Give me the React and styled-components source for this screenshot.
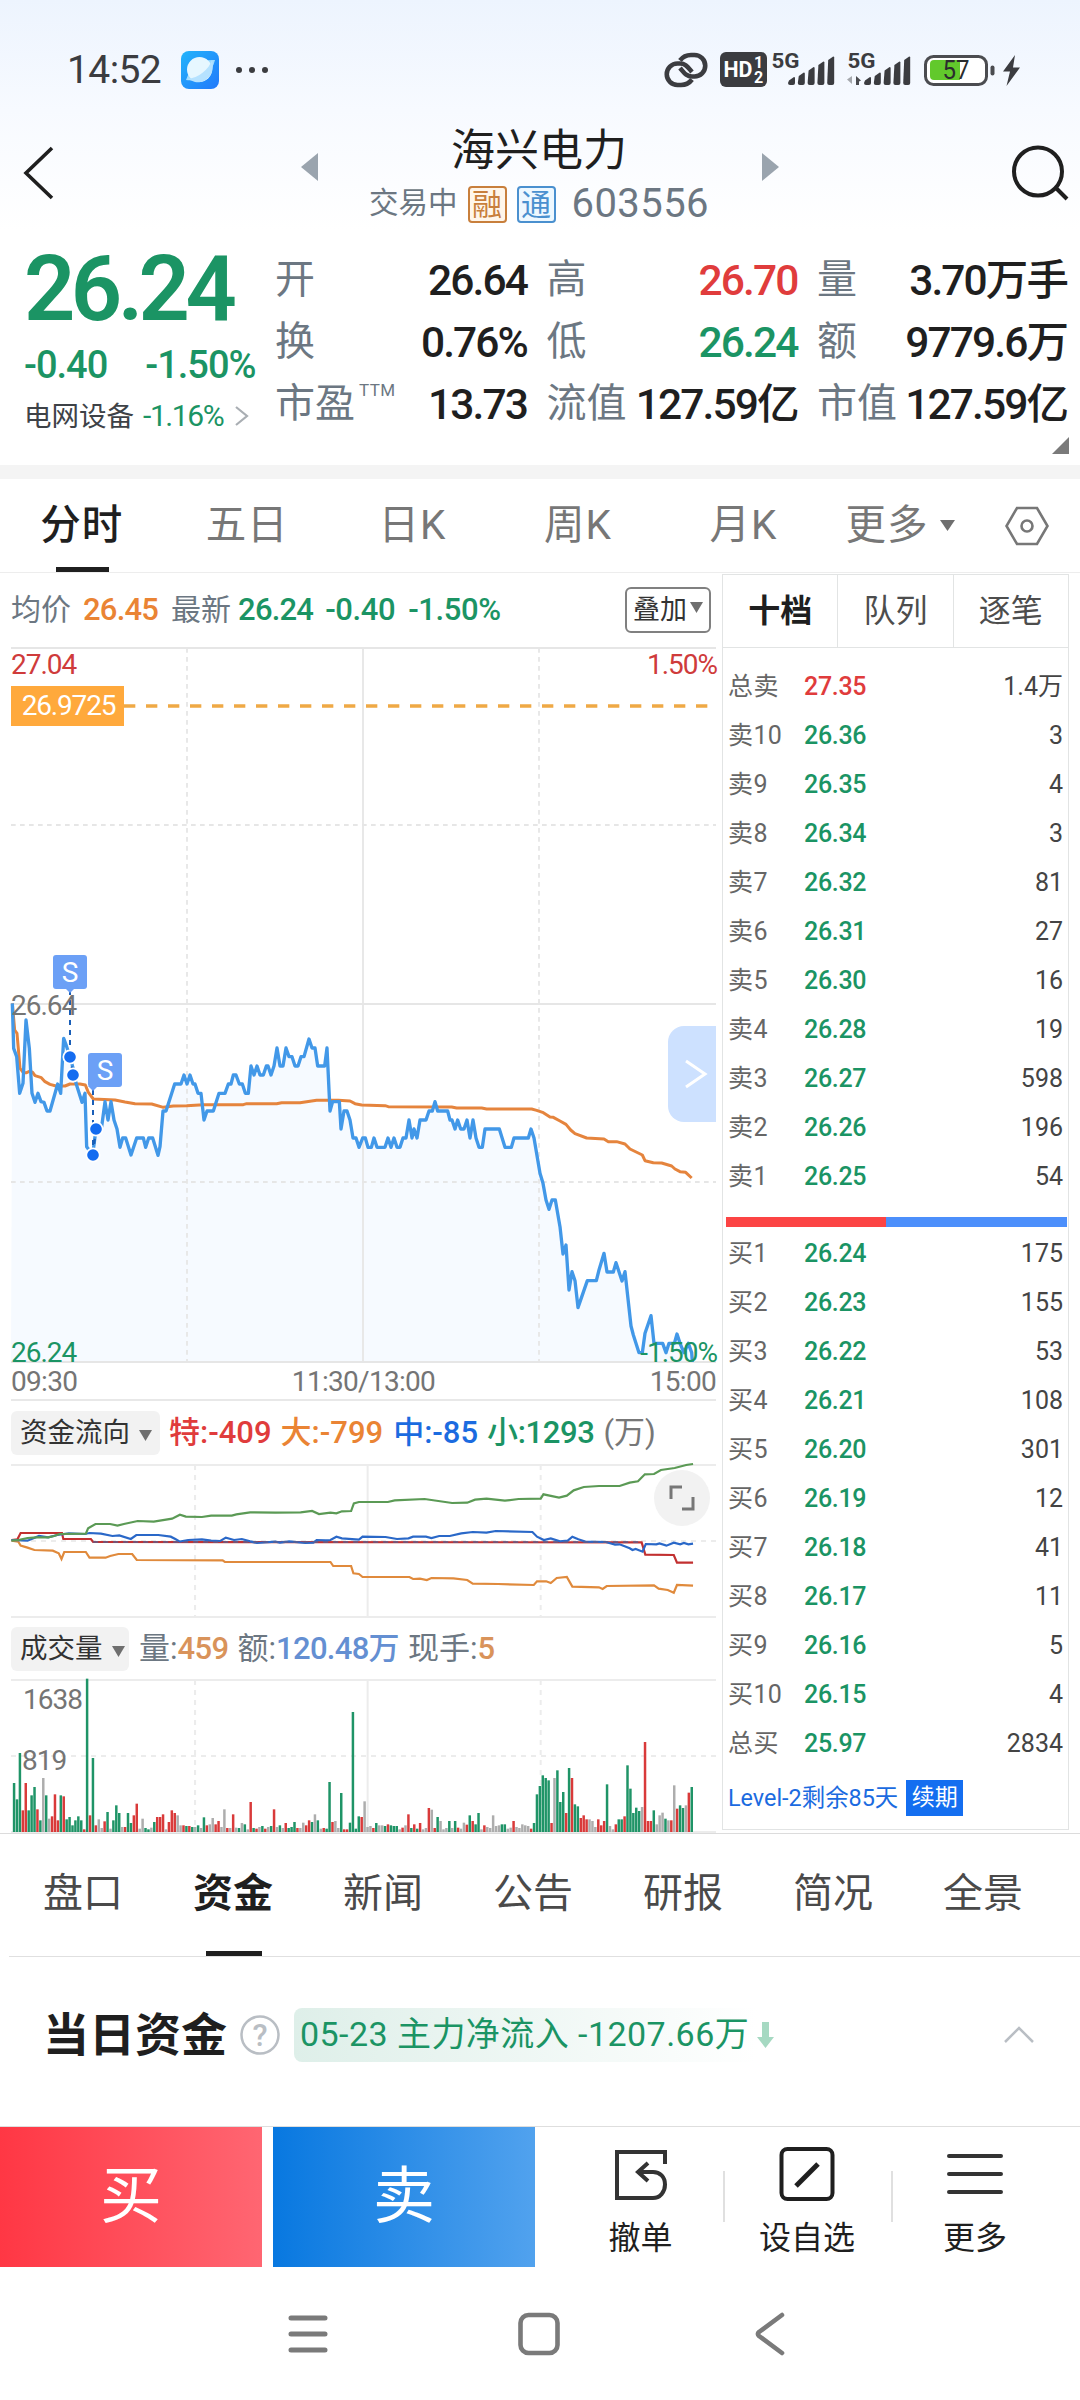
import React, { useState } from 'react'
import styled, { createGlobalStyle } from 'styled-components'

const GREEN = '#1b9464'
const RED = '#e03c3c'
const ORANGE = '#ea8434'
const BLUE = '#1b6be0'
const SLATE = '#6c7782'
const INK = '#1f1f1f'

const GlobalStyle = createGlobalStyle`
    * { box-sizing: border-box; }
    body {
        margin: 0;
        background: #fff;
        font-family: Roboto, "Noto Sans CJK SC", sans-serif;
        line-height: 1.2;
        color: ${INK};
    }
    button {
        font: inherit;
        color: inherit;
        border: 0;
        padding: 0;
        background: none;
    }
    svg { display: block; flex: none; }
`;

const Page = styled.div`
    width: 1080px;
    height: 2400px;
    overflow: hidden;
    display: flex;
    flex-direction: column;
    background: linear-gradient(#edf4fe 0, #f7faff 110px, #fff 230px);
`;

/* ---------- status bar ---------- */

const StatusBar = styled.div`
    height: 92px;
    padding: 50px 58px 0 67px;
    display: flex;
    justify-content: space-between;
`;

const StatusGroup = styled.div`
    display: flex;
    align-items: center;
    height: 40px;
    gap: ${props => props.$gap || 0}px;
`;

const Clock = styled.span`
    width: 98px;
    font-size: 39px;
    letter-spacing: -0.6px;
    color: #3b3c40;
`;

const IconSlot = styled.span`
    margin-left: ${props => props.$gap}px;
`;

/* ---------- header ---------- */

const Header = styled.header`
    height: 148px;
    display: flex;
    justify-content: space-between;
    padding: 0 11px 0 23px;
`;

const HeaderSide = styled.button`
    height: 161px;
    width: 60px;
    display: flex;
    align-items: center;
    justify-content: ${props => props.$end ? 'flex-end' : 'flex-start'};
`;

const TitleBlock = styled.div`
    width: 478px;
    margin-left: -13px;
    display: flex;
    justify-content: space-between;
`;

const Switcher = styled.button`
    height: 148px;
    display: flex;
    align-items: flex-start;
    padding-top: 61px;
`;

const TitleText = styled.div`
    display: flex;
    flex-direction: column;
    align-items: center;
    padding: 29px 1px 0 0;
`;

const StockName = styled.h1`
    margin: 0;
    font-size: 44px;
    font-weight: 400;
    line-height: 60px;
`;

const StockMeta = styled.div`
    display: flex;
    align-items: center;
    height: 46px;
    font-size: 29.5px;
    color: ${SLATE};
`;

const MarketTag = styled.span`
    width: 39px;
    height: 37px;
    margin-left: 10px;
    border: 2px solid;
    border-radius: 4px;
    font-size: 30px;
    line-height: 34px;
    text-align: center;
    color: ${props => props.$color};
    background: ${props => props.$bg};
`;

const StockCode = styled.span`
    margin-left: 16px;
    font-size: 40px;
    letter-spacing: 0.4px;
`;

/* ---------- quote ---------- */

const Quote = styled.section`
    height: 225px;
    display: flex;
    padding-right: 11px;
    position: relative;
`;

const QuoteMain = styled.div`
    width: 275px;
    padding: 2px 0 0 24px;
`;

const LastPrice = styled.div`
    height: 96px;
    font-size: 90px;
    font-weight: 600;
    line-height: 96px;
    letter-spacing: -4.6px;
    color: ${GREEN};
`;

const ChangeRow = styled.div`
    display: flex;
    gap: 38px;
    height: 54px;
    font-size: 38px;
    font-weight: 500;
    line-height: 54px;
    letter-spacing: -1px;
    color: ${GREEN};
`;

const SectorRow = styled.div`
    display: flex;
    align-items: center;
    height: 48px;
    font-size: 27.5px;
    color: #3e4247;
`;

const SectorChange = styled.span`
    margin: 0 12px 0 9px;
    font-size: 30px;
    letter-spacing: -1.4px;
    color: ${GREEN};
`;

const StatGrid = styled.div`
    flex: 1;
    display: grid;
    grid-template-columns: 252px 251px 250px;
    grid-auto-rows: 62px;
    column-gap: 19.5px;
    padding-top: 9px;
`;

const Stat = styled.div`
    display: flex;
    align-items: center;
    justify-content: space-between;
    white-space: nowrap;
`;

const StatLabel = styled.span`
    display: flex;
    font-size: 40px;
    line-height: 62px;
    color: ${SLATE};
`;

const StatSup = styled.sup`
    margin: -14px 0 0 4px;
    font-size: 17px;
    letter-spacing: 0.4px;
`;

const StatValue = styled.span`
    font-size: 42.5px;
    font-weight: 500;
    letter-spacing: -1.9px;
    color: ${props => props.$color || INK};
`;

const Corner = styled.i`
    position: absolute;
    right: 11px;
    bottom: 11px;
    border-left: 17px solid transparent;
    border-bottom: 17px solid #7a7a7a;
`;

const Band = styled.div`
    height: 14px;
    background: #f4f4f4;
`;

/* ---------- period tabs ---------- */

const PeriodTabs = styled.nav`
    height: 94px;
    display: flex;
    align-items: stretch;
    background: #fff;
    border-bottom: 1px solid #ededed;
`;

const PeriodTab = styled.button`
    width: ${props => props.$width || 165.5}px;
    height: 93px;
    position: relative;
    display: flex;
    align-items: center;
    justify-content: center;
    gap: 11px;
    padding-right: 2px;
    font-size: 40.5px;
    font-weight: ${props => props.$active ? 500 : 400};
    letter-spacing: 1px;
    color: ${props => props.$active ? INK : '#777'};

    &::after {
        content: '';
        display: ${props => props.$active ? 'block' : 'none'};
        position: absolute;
        left: 56px;
        bottom: 0;
        width: 53px;
        height: 5px;
        background: ${INK};
    }
`;

/* ---------- body ---------- */

const Body = styled.div`
    height: 1261px;
    display: grid;
    grid-template-columns: 722px 347px;
    border-bottom: 1px solid #dcdcdc;
`;

const Charts = styled.div`
    padding-left: 11px;
`;

const InfoRow = styled.div`
    width: 705px;
    height: ${props => props.$height}px;
    display: flex;
    align-items: center;
    font-size: 30px;
    white-space: nowrap;
    color: ${SLATE};
`;

const Figure = styled.span`
    margin-left: ${props => props.$gap || 0}px;
    font-size: ${props => props.$size || 31}px;
    font-weight: ${props => props.$weight || 500};
    letter-spacing: ${props => props.$spacing || 0}px;
    color: ${props => props.$color || SLATE};
`;

const OverlayButton = styled.button`
    margin-left: auto;
    margin-right: 5px;
    width: 86px;
    height: 46px;
    border: 2px solid #808080;
    border-radius: 6px;
    display: flex;
    align-items: center;
    justify-content: center;
    gap: 3px;
    font-size: 27px;
    color: #333;

    svg { margin-bottom: 5px; }
`;

const Picker = styled.button`
    width: ${props => props.$width}px;
    height: 44px;
    border-radius: 6px;
    background: #f2f2f2;
    display: flex;
    align-items: center;
    padding-left: 9px;
    gap: 9px;
    font-size: 27.5px;
    color: #333;

    svg { margin-top: 6px; }
`;

const ChartBox = styled.div`
    position: relative;
    width: 705px;
    height: ${props => props.$height}px;

    > svg { width: 100%; height: 100%; overflow: visible; }
`;

const AxisLabel = styled.span`
    position: absolute;
    left: ${props => props.$right ? 'auto' : `${props.$left || 0}px`};
    right: ${props => props.$right ? '-1px' : 'auto'};
    top: ${props => props.$top}px;
    font-size: 28px;
    line-height: 34px;
    letter-spacing: -1px;
    color: ${props => props.$color || '#757575'};
`;

const CostBadge = styled.span`
    position: absolute;
    left: 0;
    top: 39px;
    width: 113px;
    height: 40px;
    padding-left: 2px;
    font-size: 28px;
    line-height: 40px;
    text-align: center;
    letter-spacing: -1.2px;
    color: #fff;
    background: #ffa93c;
`;

const TradeMark = styled.span`
    position: absolute;
    left: ${props => props.$x}px;
    top: ${props => props.$y}px;
    width: 34px;
    height: 34px;
    border-radius: 3px;
    font-size: 28px;
    line-height: 35px;
    text-align: center;
    color: #fff;
    background: #6ca0f6;

    &::after {
        content: '';
        position: absolute;
        left: ${props => props.$tip}px;
        bottom: -4px;
        border: 5px solid transparent;
        border-bottom: 0;
        border-top-color: #6ca0f6;
    }
`;

const SideHandle = styled.button`
    position: absolute;
    right: 0;
    top: 379px;
    width: 48px;
    height: 96px;
    border-radius: 16px 0 0 16px;
    background: #cde1ff;
    display: flex;
    align-items: center;
    justify-content: center;
    padding-left: 7px;
`;

const ExpandButton = styled.button`
    position: absolute;
    right: 6px;
    top: 6px;
    width: 56px;
    height: 56px;
    border-radius: 50%;
    background: #f2f2f2;
    display: flex;
    align-items: center;
    justify-content: center;
`;

const TimeAxis = styled.div`
    width: 705px;
    height: 38px;
    display: flex;
    justify-content: space-between;
    border-bottom: 2px solid #e8e8e8;
    font-size: 28px;
    line-height: 38px;
    letter-spacing: -0.7px;
    color: #757575;
`;

/* ---------- order book ---------- */

const OrderBook = styled.aside`
    height: 1256px;
    margin-top: 1px;
    border: 1px solid #e2e4e4;
    display: flex;
    flex-direction: column;
`;

const BookTabs = styled.div`
    display: flex;
    height: 73px;
    border-bottom: 1px solid #e2e4e4;
`;

const BookTab = styled.button`
    flex: 1;
    font-size: 32px;
    font-weight: ${props => props.$active ? 700 : 400};
    color: ${props => props.$active ? INK : '#4d4d4d'};

    &:not(:first-child) { border-left: 1px solid #e2e4e4; }
`;

const BookSide = styled.div`
    padding: ${props => props.$top}px 5px 0 5px;
`;

const BookRow = styled.div`
    height: 49px;
    display: grid;
    grid-template-columns: 76px 1fr auto;
    align-items: center;
    font-size: 25px;
    color: #444;
`;

const BookLabel = styled.span`
    color: #666;
    letter-spacing: 0.4px;
`;

const BookPrice = styled.span`
    font-weight: 500;
    letter-spacing: -0.3px;
    color: ${props => props.$color};
`;

const Ratio = styled.div`
    height: 10px;
    margin: 16px 1px 0 3px;
    display: flex;
    background: #4c8ffb;

    i { width: 160px; background: #fc4444; }
`;

const LevelRow = styled.div`
    height: 60px;
    padding-left: 5px;
    display: flex;
    align-items: center;
    gap: 8px;
    font-size: 23.4px;
    color: ${BLUE};
`;

const Renew = styled.button`
    width: 57px;
    height: 36px;
    font-size: 23px;
    color: #fff;
    background: #146ef0;
`;

/* ---------- section tabs ---------- */

const SectionTabs = styled.nav`
    height: 123px;
    margin-left: 9px;
    display: flex;
    border-bottom: 1px solid #e0e0e0;
`;

const SectionTab = styled.button`
    width: 150px;
    height: 122px;
    position: relative;
    padding: 0 2px 3px 0;
    font-size: 40px;
    font-weight: ${props => props.$active ? 700 : 400};
    color: ${props => props.$active ? INK : '#4a4a4a'};

    &::after {
        content: '';
        display: ${props => props.$active ? 'block' : 'none'};
        position: absolute;
        left: 47px;
        bottom: 0;
        width: 56px;
        height: 5px;
        background: ${INK};
    }
`;

const FundRow = styled.section`
    height: 169px;
    display: flex;
    align-items: center;
    padding: 0 46px 14px 43px;
`;

const FundTitle = styled.h2`
    margin: 0 13px 0 0;
    font-size: 46px;
    font-weight: 700;
    line-height: 56px;
`;

const FundTag = styled.span`
    height: 54px;
    margin-left: 14px;
    padding: 0 2px 0 6px;
    border-radius: 8px;
    display: flex;
    align-items: center;
    gap: 8px;
    font-size: 34px;
    letter-spacing: 0.45px;
    white-space: nowrap;
    color: ${GREEN};
    background: linear-gradient(90deg, #deefe9, #fff 96%);
`;

const FundFold = styled.button`
    margin-left: auto;
`;

/* ---------- bottom ---------- */

const ActionBar = styled.footer`
    height: 142px;
    display: flex;
    border-top: 1px solid #dedede;
`;

const TradeButton = styled.button`
    width: 262px;
    height: 140px;
    margin-right: 11px;
    font-size: 62px;
    color: #fff;
    background: linear-gradient(90deg, ${props => props.$from}, ${props => props.$to});
`;

const Action = styled.button`
    width: ${props => props.$width}px;
    height: 140px;
    position: relative;
    display: flex;
    flex-direction: column;
    align-items: center;
    padding: 18px 0 0 ${props => props.$indent || 0}px;
    font-size: 32px;
    line-height: 66px;

    svg { height: 60px; }

    &:nth-last-child(-n + 2)::before {
        content: '';
        position: absolute;
        left: 0;
        top: 44px;
        width: 2px;
        height: 51px;
        background: #e0e0e0;
    }
`;

const SystemNav = styled.div`
    flex: 1;
    display: flex;
    justify-content: center;
    align-items: center;
    gap: 190px;
    padding: 0 2px 1px 0;
`;

/* ---------- data ---------- */

const stats = [
    { label: '开', value: '26.64' },
    { label: '高', value: '26.70', color: RED },
    { label: '量', value: '3.70万手' },
    { label: '换', value: '0.76%' },
    { label: '低', value: '26.24', color: GREEN },
    { label: '额', value: '9779.6万' },
    { label: '市盈', sup: 'TTM', value: '13.73' },
    { label: '流值', value: '127.59亿' },
    { label: '市值', value: '127.59亿' },
]

const periods = ['分时', '五日', '日K', '周K', '月K']
const sections = ['盘口', '资金', '新闻', '公告', '研报', '简况', '全景']

const sells = [
    ['总卖', '27.35', '1.4万', RED],
    ['卖10', '26.36', '3'],
    ['卖9', '26.35', '4'],
    ['卖8', '26.34', '3'],
    ['卖7', '26.32', '81'],
    ['卖6', '26.31', '27'],
    ['卖5', '26.30', '16'],
    ['卖4', '26.28', '19'],
    ['卖3', '26.27', '598'],
    ['卖2', '26.26', '196'],
    ['卖1', '26.25', '54'],
]

const buys = [
    ['买1', '26.24', '175'],
    ['买2', '26.23', '155'],
    ['买3', '26.22', '53'],
    ['买4', '26.21', '108'],
    ['买5', '26.20', '301'],
    ['买6', '26.19', '12'],
    ['买7', '26.18', '41'],
    ['买8', '26.17', '11'],
    ['买9', '26.16', '5'],
    ['买10', '26.15', '4'],
    ['总买', '25.97', '2834'],
]

const priceLine = '37,220 41,355 50,380 59,490 69,460 78,270 88,355 96,490 105,517 114,490 123,515 132,517 141,543 150,543 173,462 182,490 191,325 200,350 210,380 218,410 228,460 246,517 255,490 260,650 278,675 288,597 305,590 315,515 324,570 333,515 342,570 351,597 360,652 368,624 377,624 393,675 410,624 430,624 437,652 446,624 458,624 474,676 480,650 489,543 498,543 507,515 524,462 543,462 552,435 561,462 570,435 579,462 585,462 594,490 603,490 612,570 621,543 640,543 657,490 675,490 685,462 693,462 700,435 708,435 718,462 727,462 736,490 745,490 753,408 762,435 771,408 780,435 790,435 799,408 804,408 813,435 822,408 831,354 840,408 849,408 858,354 867,380 876,380 885,408 894,408 903,380 912,380 927,327 936,354 945,354 953,408 974,408 981,354 990,543 998,515 1018,515 1023,597 1032,543 1041,543 1050,570 1059,624 1068,624 1077,652 1088,624 1096,624 1104,652 1114,652 1122,624 1131,652 1155,652 1164,624 1173,652 1182,624 1191,652 1200,652 1209,624 1218,624 1227,570 1236,624 1242,597 1251,624 1260,570 1278,570 1287,543 1297,543 1305,515 1313,543 1343,543 1350,570 1356,570 1365,597 1373,570 1382,597 1392,597 1401,570 1410,624 1419,570 1428,624 1437,652 1447,652 1455,597 1498,597 1515,652 1534,652 1542,624 1585,624 1593,597 1602,624 1620,730 1629,760 1638,810 1647,838 1656,810 1666,810 1680,890 1689,972 1698,945 1707,1080 1716,1025 1725,1052 1734,1133 1762,1052 1789,1052 1797,1020 1812,970 1821,1026 1840,1026 1848,998 1866,1053 1875,1025 1893,1188 1900,1215 1917,1268 1927,1268 1935,1210 1953,1157 1962,1240 1988,1240 1998,1268 2007,1240 2023,1240 2031,1212 2040,1240 2052,1268 2065,1240 2075,1268 2077,1296'

const avgLine = '37,220 44,300 51,310 60,415 70,428 80,428 90,423 98,427 105,437 124,443 135,455 150,463 168,468 195,468 210,462 240,462 256,465 265,487 280,507 345,510 375,516 405,521 455,522 490,532 520,528 560,527 610,524 730,524 740,521 830,521 845,518 900,518 950,511 1015,511 1050,513 1065,521 1085,525 1155,527 1165,530 1355,531 1370,534 1445,534 1460,537 1595,537 1610,541 1630,548 1650,561 1660,562 1680,573 1698,583 1712,600 1725,611 1760,624 1812,627 1825,635 1850,635 1875,642 1890,657 1927,675 1935,692 1960,698 1985,699 2015,708 2025,717 2040,725 2057,727 2075,744'

const flowLines = [
    { color: '#c23030', points: '25,480 38,478 45,459 135,459 138,477 198,477 203,486 1398,487 1406,524 1468,525 1475,548 1510,548' },
    { color: '#e08a3c', points: '25,482 40,485 45,497 60,503 75,510 115,512 128,520 134,537 140,516 187,516 195,533 230,533 240,528 258,522 288,522 298,540 485,541 490,546 720,546 726,558 765,558 770,580 782,582 790,591 892,591 900,597 915,596 930,600 940,594 988,595 1018,600 1030,611 1085,612 1163,615 1170,604 1190,604 1200,609 1213,594 1235,591 1247,620 1305,622 1313,627 1322,618 1425,616 1435,626 1455,630 1468,638 1475,615 1510,617' },
    { color: '#2a68c8', points: '25,480 60,482 85,468 105,472 125,465 150,460 185,462 195,459 220,461 245,468 260,466 285,477 297,465 345,465 372,470 382,477 392,485 410,480 440,478 460,482 480,483 492,473 510,480 527,477 545,484 560,489 600,485 610,488 630,484 665,489 683,488 690,480 710,481 720,480 733,470 745,475 782,479 790,470 840,471 865,477 890,475 900,470 928,470 940,474 957,468 980,468 1005,460 1030,456 1060,458 1080,453 1160,456 1170,470 1185,480 1200,475 1220,484 1237,482 1247,470 1260,478 1275,485 1320,486 1340,494 1350,493 1372,505 1378,510 1385,507 1400,515 1407,492 1430,493 1437,490 1452,497 1468,488 1482,493 1490,489 1500,493 1510,491' },
    { color: '#5b9a55', points: '25,482 40,480 60,474 80,472 105,472 118,468 130,462 187,461 192,445 208,432 240,432 256,437 270,432 300,423 335,425 375,416 392,404 405,410 440,411 460,407 505,407 515,403 545,397 600,398 655,397 680,393 695,402 720,398 733,400 745,394 765,393 771,370 782,366 845,366 860,361 925,357 985,369 1018,368 1035,359 1060,356 1100,362 1130,357 1178,356 1184,343 1218,353 1235,347 1250,331 1272,321 1305,318 1350,318 1372,308 1390,304 1405,283 1425,282 1440,270 1470,264 1495,255 1510,252' },
]

// one bar a minute: g down, r up, a flat
const volumes = 'g147 g98 g237 r65 r147 g65 g110 g135 r68 g35 a162 g110 a40 r47 r113 r35 g110 r107 g38 g45 g20 g35 g47 g35 r8 g460 r50 g222 r20 a38 a12 r32 g60 a10 g35 g80 g57 a15 r15 g57 g27 r50 r85 a10 a40 g12 g8 a13 g30 r45 r45 r53 a8 r30 r65 r57 a50 a20 r20 g18 r18 g15 a15 g20 a12 g44 r20 a23 a42 r23 r33 a15 a68 r12 a12 r53 a13 g12 a27 g23 a8 r90 g12 r10 a15 g18 r10 a15 g18 r68 a15 g20 a12 r27 g12 g15 g30 r12 a12 a28 r20 r35 g30 a53 g35 a10 r12 g10 g150 r30 a33 a12 g117 r8 r8 g28 g360 g10 g47 r45 a92 a15 a18 r12 g27 a20 a20 g18 r23 g20 g18 g18 a8 r13 a20 r53 g12 r23 g10 r27 a8 a12 r72 a67 r12 g45 a33 a8 a12 g33 a12 g33 r13 a10 a28 r22 g50 r33 g23 g57 a8 r20 a15 a12 a50 a18 a20 g23 g23 a10 a13 r33 a15 a12 a23 a20 a18 r10 g27 g113 g138 g170 g162 g155 r27 a162 g185 g90 g120 r57 g192 r162 g83 g77 r42 r50 r38 a38 a33 a15 r38 r20 r33 g143 a18 a8 r23 g38 g38 r47 g200 g130 g57 g73 g63 a75 r270 r33 r33 g65 a23 a50 a58 g40 a35 r35 a140 r70 g80 g72 a80 r118 g135'.split(' ')
const volumeColors = { g: '#1f9467', r: '#d93a3a', a: '#adadad' }

/* ---------- drawings ---------- */

const Caret = ({ width = 13, height = 11, color = '#6f6f6f' }) => (
    <svg width={width} height={height} viewBox="0 0 10 10" preserveAspectRatio="none">
        <path d="M0 0h10L5 10z" fill={color} />
    </svg>
)

const Signal = ({ data }) => (
    <svg width="66" height="44" viewBox="0 -5 66 44">
        <text x="0.500" y="15" fontSize="20" fontWeight="700" textLength="28" lengthAdjust="spacingAndGlyphs" fill="#3b3c40">5G</text>
        {data && <path d="M5 23v8l-5-4.500" fill="#a5a8ad" />}
        {data && <path d="M9 32v-9l5 4.500-2 1V32z" fill="#4a4b4f" />}
        {[24, 19.500, 14, 8.500, 3.500].map((top, i) => (
            <path key={top} d={`M${18 + i * 9.800} ${top + 3.500}l5-3.500q1 0 1 1V30q0 2-2 2h-3q-2 0-2-2z`} fill="#3b3c40" />
        ))}
    </svg>
)

function StatusIcons() {
    return (
        <StatusGroup>
            <svg width="44" height="36" viewBox="0 0 44 36" fill="none" stroke="#3b3c40" strokeWidth="4.600" strokeLinecap="butt">
                <path d="M16 8.500C19 4.500 22 3 27 3h3.500a10.500 10.500 0 0 1 0 21.500H28c-6 0-8-4-12-8.500" />
                <path d="M28 27.500C25 31.500 22 33 17 33h-3.500a10.500 10.500 0 0 1 0-21.500H16c6 0 8 4 12 8.500" />
            </svg>
            <IconSlot $gap={12}>
                <svg width="48" height="36" viewBox="0 0 48 36">
                    <rect width="47" height="35" rx="6" fill="#3b3c40" />
                    <text x="3.500" y="25" fontSize="22" fontWeight="700" fill="#fff" textLength="29" lengthAdjust="spacingAndGlyphs">HD</text>
                    <text x="34" y="16" fontSize="16" fontWeight="700" fill="#fff">1</text>
                    <text x="34" y="31" fontSize="16" fontWeight="700" fill="#fff">2</text>
                </svg>
            </IconSlot>
            <IconSlot $gap={3}><Signal /></IconSlot>
            <IconSlot $gap={10}><Signal data /></IconSlot>
            <IconSlot $gap={11}>
                <svg width="98" height="34" viewBox="0 0 98 34">
                    <rect x="1.500" y="3.500" width="61" height="28" rx="8" fill="#fff" stroke="#4b4c50" strokeWidth="3" />
                    <path d="M10 7h26v20H10a4 4 0 0 1-4-4V11a4 4 0 0 1 4-4z" fill="#62c92c" />
                    <text x="18.500" y="25.500" fontSize="25" fill="#2b2c2e" textLength="27" lengthAdjust="spacingAndGlyphs">57</text>
                    <path d="M68.500 14.500v6" stroke="#4b4c50" strokeWidth="4" strokeLinecap="round" />
                    <path d="M91 2L79 18.500h7L82.500 33 96 14.500h-7z" fill="#3b3c40" />
                </svg>
            </IconSlot>
        </StatusGroup>
    )
}

// grid shared by the two small charts, stretched to the box
const SmallGrid = ({ top, bottom, mid }) => (
    <g stroke="#ececec" strokeWidth="2" fill="none">
        <path vectorEffect="non-scaling-stroke" d={`M24 ${top}H1560M24 ${bottom}H1560M801 ${top}V${bottom}`} />
        <path vectorEffect="non-scaling-stroke" strokeDasharray="5 5" d={`M24 ${mid}H1560M425 ${top}V${bottom}M1178 ${top}V${bottom}`} />
    </g>
)

function PriceChart() {
    return (
        <ChartBox $height={716}>
            <svg viewBox="33 -849 2115 2148">
                <g stroke="#e6e6e6" strokeWidth="5.500" fill="none">
                    <polygon points={`${priceLine} 2077,1296 33,1296`} fill="#f6faff" stroke="none" />
                    <path d="M33 -846H2148M33 222H2148M33 1296H2148M1089 -846V1296" />
                    <path strokeDasharray="14 13" d="M33 -315H2148M33 756H2148M561 -846V1296M1617 -846V1296" />
                </g>
                <path d="M372 -672H2148" stroke="#efa945" strokeWidth="10" strokeDasharray="34 32" />
                <polyline points={avgLine} fill="none" stroke="#e5843d" strokeWidth="9" strokeLinejoin="round" />
                <polyline points={priceLine} fill="none" stroke="#4298e8" strokeWidth="10" strokeLinejoin="round" />
                <path d="M210 180V380M210 380L219 435M279 480V675M288 597L279 675" stroke="#1a5fb8" strokeWidth="6" strokeDasharray="15 15" />
                <g fill="#146cf0" stroke="#fff" strokeWidth="5">
                    <circle cx="210" cy="381" r="20" />
                    <circle cx="219" cy="435" r="20" />
                    <circle cx="288" cy="597" r="20" />
                    <circle cx="279" cy="675" r="20" />
                </g>
            </svg>
            <AxisLabel $top={1} $color="#cf3b3b">27.04</AxisLabel>
            <AxisLabel $top={1} $right $color="#cf3b3b">1.50%</AxisLabel>
            <AxisLabel $top={342}>26.64</AxisLabel>
            <AxisLabel $top={689} $color={GREEN}>26.24</AxisLabel>
            <AxisLabel $top={689} $right $color={GREEN}>-1.50%</AxisLabel>
            <CostBadge>26.9725</CostBadge>
            <TradeMark $x={42} $y={308} $tip={12}>S</TradeMark>
            <TradeMark $x={77} $y={406} $tip={0}>S</TradeMark>
            <SideHandle>
                <svg width="24" height="30" viewBox="0 0 24 30" fill="none" stroke="#fff" strokeWidth="3">
                    <path d="M2 2l19 13L2 28" />
                </svg>
            </SideHandle>
        </ChartBox>
    )
}

function FlowChart() {
    return (
        <ChartBox $height={154}>
            <svg viewBox="24 252 1536 462" preserveAspectRatio="none">
                <SmallGrid top={255} bottom={711} mid={483} />
                {flowLines.map(line => (
                    <polyline key={line.color} points={line.points} fill="none" stroke={line.color} strokeWidth="2.200" vectorEffect="non-scaling-stroke" />
                ))}
                <path d="M203 486H1398" stroke="#5d5f8c" strokeWidth="1.500" strokeDasharray="5 5" vectorEffect="non-scaling-stroke" />
            </svg>
            <ExpandButton>
                <svg width="26" height="26" viewBox="0 0 26 26" fill="none" stroke="#777" strokeWidth="3">
                    <path d="M2 14V2h11M24 12v12H13" />
                </svg>
            </ExpandButton>
        </ChartBox>
    )
}

function VolumeChart() {
    const step = (1507 - 30.5) / (volumes.length - 1)

    return (
        <ChartBox $height={154}>
            <AxisLabel $top={4} $left={12}>1638</AxisLabel>
            <AxisLabel $top={65} $left={11}>819</AxisLabel>
            <svg viewBox="24 207 1536 462" preserveAspectRatio="none">
                <SmallGrid top={210} bottom={666} mid={438} />
                {volumes.map((bar, i) => {
                    const height = Number(bar.slice(1))
                    return <rect key={i} x={28 + i * step} y={666 - height} width="5.400" height={height} fill={volumeColors[bar[0]]} />
                })}
            </svg>
        </ChartBox>
    )
}

function BookRows({ rows }) {
    return rows.map(([label, price, count, color = GREEN]) => (
        <BookRow key={label}>
            <BookLabel>{label}</BookLabel>
            <BookPrice $color={color}>{price}</BookPrice>
            <span>{count}</span>
        </BookRow>
    ))
}

function App() {
    const [period, setPeriod] = useState('分时')
    const [book, setBook] = useState('十档')
    const [section, setSection] = useState('资金')

    return (
        <Page>
            <GlobalStyle />
            <StatusBar>
                <StatusGroup $gap={16}>
                    <Clock>14:52</Clock>
                    <svg width="38" height="38" viewBox="0 0 38 38">
                        <defs>
                            <linearGradient id="app" x1="0" y1="0" x2="1" y2="1">
                                <stop offset="0" stopColor="#23b4fb" />
                                <stop offset="1" stopColor="#2179fb" />
                            </linearGradient>
                        </defs>
                        <rect width="38" height="38" rx="8" fill="url(#app)" />
                        <path d="M5 29C9 16 20 8 34 9c-3 13-15 22-29 20z" fill="#9fdcff" />
                        <circle cx="18.500" cy="18.500" r="12.500" fill="#e6f7ff" />
                        <path d="M6 28C18 27 28 18 31 9c4 14-6 24-17 22z" fill="#b5e2ff" />
                    </svg>
                    <svg width="34" height="8" viewBox="0 0 34 8" fill="#3b3c40">
                        <circle cx="4" cy="4" r="3" />
                        <circle cx="17" cy="4" r="3" />
                        <circle cx="30" cy="4" r="3" />
                    </svg>
                </StatusGroup>
                <StatusIcons />
            </StatusBar>

            <Header>
                <HeaderSide>
                    <svg width="32" height="54" viewBox="0 0 32 54" fill="none" stroke={INK} strokeWidth="3.600">
                        <path d="M29 2L3 27l26 25" />
                    </svg>
                </HeaderSide>
                <TitleBlock>
                    <Switcher>
                        <svg width="17" height="28" viewBox="0 0 17 28"><path d="M17 0v28L0 14z" fill="#9aa4ae" /></svg>
                    </Switcher>
                    <TitleText>
                        <StockName>海兴电力</StockName>
                        <StockMeta>
                            交易中
                            <MarketTag $color="#c87f3c" $bg="#fff6ea">融</MarketTag>
                            <MarketTag $color="#4a90cf" $bg="#eef8ff">通</MarketTag>
                            <StockCode>603556</StockCode>
                        </StockMeta>
                    </TitleText>
                    <Switcher>
                        <svg width="17" height="28" viewBox="0 0 17 28"><path d="M0 0v28l17-14z" fill="#9aa4ae" /></svg>
                    </Switcher>
                </TitleBlock>
                <HeaderSide $end>
                    <svg width="58" height="56" viewBox="0 0 58 56" fill="none" stroke={INK} strokeWidth="4">
                        <circle cx="27" cy="26.500" r="24" />
                        <path d="M44 42l12 12" />
                    </svg>
                </HeaderSide>
            </Header>

            <Quote>
                <QuoteMain>
                    <LastPrice>26.24</LastPrice>
                    <ChangeRow>
                        <span>-0.40</span>
                        <span>-1.50%</span>
                    </ChangeRow>
                    <SectorRow>
                        电网设备
                        <SectorChange>-1.16%</SectorChange>
                        <svg width="14" height="20" viewBox="0 0 14 20" fill="none" stroke="#a9aeb3" strokeWidth="2.200">
                            <path d="M1 1l11 9L1 19" />
                        </svg>
                    </SectorRow>
                </QuoteMain>
                <StatGrid>
                    {stats.map(item => (
                        <Stat key={item.label}>
                            <StatLabel>
                                {item.label}
                                {item.sup && <StatSup>{item.sup}</StatSup>}
                            </StatLabel>
                            <StatValue $color={item.color}>{item.value}</StatValue>
                        </Stat>
                    ))}
                </StatGrid>
                <Corner />
            </Quote>
            <Band />

            <PeriodTabs>
                {periods.map(name => (
                    <PeriodTab key={name} $active={name === period} onClick={() => setPeriod(name)}>{name}</PeriodTab>
                ))}
                <PeriodTab $width={148}>更多<Caret width={15} height={11} /></PeriodTab>
                <PeriodTab $width={105}>
                    <svg width="44" height="40" viewBox="0 0 44 40" fill="none" stroke="#777" strokeWidth="2.600">
                        <path d="M12 2h20l10.500 18L32 38H12L1.500 20z" />
                        <circle cx="22" cy="20" r="5.500" />
                    </svg>
                </PeriodTab>
            </PeriodTabs>

            <Body>
                <Charts>
                    <InfoRow $height={74}>
                        均价
                        <Figure $gap={12} $spacing={-0.8} $color={ORANGE}>26.45</Figure>
                        <Figure $gap={13} $size={30} $weight={400}>最新</Figure>
                        <Figure $gap={7} $spacing={-0.8} $color={GREEN}>26.24</Figure>
                        <Figure $gap={12} $spacing={-0.4} $color={GREEN}>-0.40</Figure>
                        <Figure $gap={13} $spacing={-0.4} $color={GREEN}>-1.50%</Figure>
                        <OverlayButton>叠加<Caret /></OverlayButton>
                    </InfoRow>
                    <PriceChart />
                    <TimeAxis>
                        <span>09:30</span>
                        <span>11:30/13:00</span>
                        <span>15:00</span>
                    </TimeAxis>
                    <InfoRow $height={63}>
                        <Picker $width={149}>资金流向<Caret /></Picker>
                        <Figure $gap={9} $color={RED}>特:-409</Figure>
                        <Figure $gap={9} $color={ORANGE}>大:-799</Figure>
                        <Figure $gap={10} $color={BLUE}>中:-85</Figure>
                        <Figure $gap={9} $spacing={-0.4} $color={GREEN}>小:1293</Figure>
                        <Figure $gap={9} $weight={400} $color="#777">(万)</Figure>
                    </InfoRow>
                    <FlowChart />
                    <InfoRow $height={61}>
                        <Picker $width={118}>成交量<Caret /></Picker>
                        <Figure $gap={10} $weight={400}>量:</Figure>
                        <Figure $spacing={-0.6} $color="#d9935a">459</Figure>
                        <Figure $gap={9} $weight={400}>额:</Figure>
                        <Figure $spacing={-0.7} $color="#648fd2">120.48万</Figure>
                        <Figure $gap={9} $weight={400}>现手:</Figure>
                        <Figure $color="#d9935a">5</Figure>
                    </InfoRow>
                    <VolumeChart />
                </Charts>

                <OrderBook>
                    <BookTabs>
                        {['十档', '队列', '逐笔'].map(name => (
                            <BookTab key={name} $active={name === book} onClick={() => setBook(name)}>{name}</BookTab>
                        ))}
                    </BookTabs>
                    <BookSide $top={14}><BookRows rows={sells} /></BookSide>
                    <Ratio><i /></Ratio>
                    <BookSide $top={2}><BookRows rows={buys} /></BookSide>
                    <LevelRow>
                        Level-2剩余85天
                        <Renew>续期</Renew>
                    </LevelRow>
                </OrderBook>
            </Body>

            <SectionTabs>
                {sections.map(name => (
                    <SectionTab key={name} $active={name === section} onClick={() => setSection(name)}>{name}</SectionTab>
                ))}
            </SectionTabs>

            <FundRow>
                <FundTitle>当日资金</FundTitle>
                <svg width="40" height="40" viewBox="0 0 40 40">
                    <circle cx="20" cy="20" r="18.500" fill="none" stroke="#b9bec4" strokeWidth="2.500" />
                    <text x="20" y="31" fontSize="31" fontWeight="500" textAnchor="middle" fill="#b9bec4">?</text>
                </svg>
                <FundTag>
                    05-23 主力净流入 -1207.66万
                    <svg width="17" height="26" viewBox="0 0 17 26">
                        <path d="M5 0h7v15h5L8.500 26 0 15h5z" fill="#a6d9c2" />
                    </svg>
                </FundTag>
                <FundFold>
                    <svg width="30" height="18" viewBox="0 0 30 18" fill="none" stroke="#b9bec4" strokeWidth="2.500">
                        <path d="M1 16L15 2l14 14" />
                    </svg>
                </FundFold>
            </FundRow>

            <ActionBar>
                <TradeButton $from="#ff3744" $to="#ff6672">买</TradeButton>
                <TradeButton $from="#0878e0" $to="#51a2ee">卖</TradeButton>
                <Action $width={177} $indent={12}>
                    <svg width="54" height="60" viewBox="0 0 54 60" fill="none" stroke="#333" strokeWidth="4">
                        <path d="M51 19V7H3v46h36c7 0 12-6 12-13.500S46 27 39 27H24" />
                        <path d="M34 18l-10 9 10 9" />
                    </svg>
                    撤单
                </Action>
                <Action $width={168}>
                    <svg width="56" height="60" viewBox="0 0 56 60" fill="none" stroke={INK} strokeWidth="4">
                        <rect x="2.500" y="4" width="51" height="50" rx="6" />
                        <path d="M17 41l22-22" strokeWidth="5" />
                    </svg>
                    设自选
                </Action>
                <Action $width={168}>
                    <svg width="56" height="60" viewBox="0 0 56 60" stroke="#333" strokeWidth="4" strokeLinecap="round">
                        <path d="M2 11h52M2 29h52M2 47h52" />
                    </svg>
                    更多
                </Action>
            </ActionBar>

            <SystemNav>
                <svg width="40" height="44" viewBox="0 0 40 44" stroke="#7a7a7a" strokeWidth="5" strokeLinecap="round">
                    <path d="M3 6h34M3 22h34M3 38h34" />
                </svg>
                <svg width="42" height="44" viewBox="0 0 42 44" fill="none" stroke="#7a7a7a" strokeWidth="4.600">
                    <rect x="2.500" y="3" width="37" height="38" rx="8" />
                </svg>
                <svg width="40" height="44" viewBox="0 0 40 44" fill="none" stroke="#7a7a7a" strokeWidth="4.600" strokeLinecap="round" strokeLinejoin="round">
                    <path d="M32 3L9 20q-2 2 0 4l23 17" />
                </svg>
            </SystemNav>
        </Page>
    )
}

export default App
